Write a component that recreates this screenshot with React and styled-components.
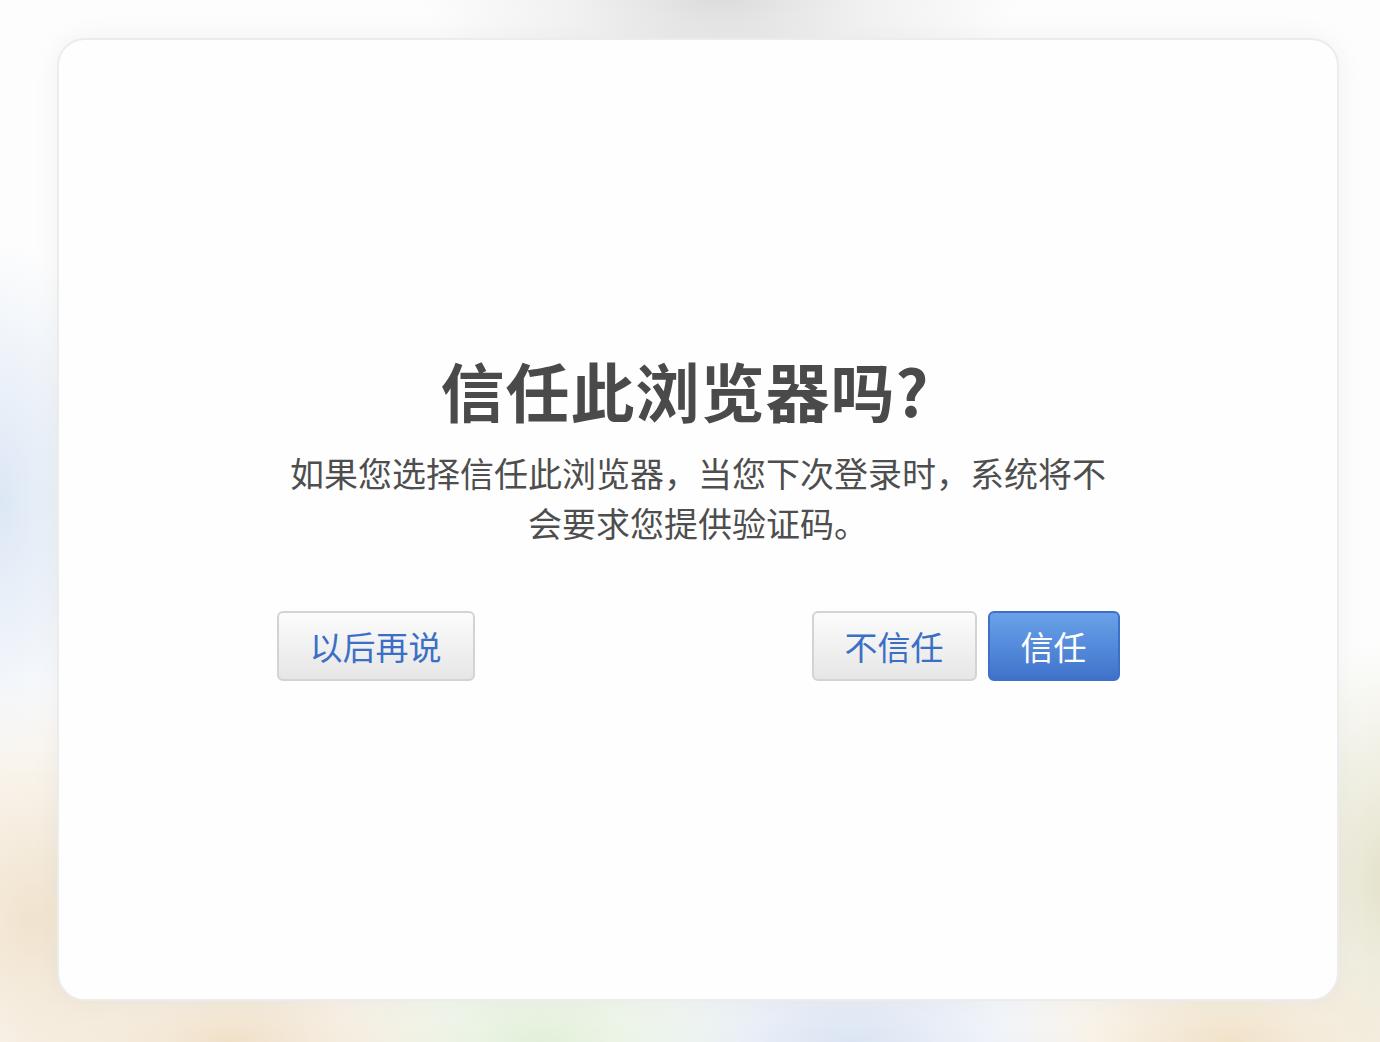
import styled, { createGlobalStyle } from "styled-components";

const GlobalStyle = createGlobalStyle`
  html, body {
    margin: 0;
    padding: 0;
  }
  body {
    font-family: "Noto Sans CJK SC", "Noto Sans", sans-serif;
    background-color: #fdfdfd;
  }
`;

const Page = styled.div`
  box-sizing: border-box;
  height: 1042px;
  padding: 38px 41px 41px 57px;
  display: flex;
  background:
    radial-gradient(ellipse 300px 110px at 720px 0, #dcdcdc 0%, rgba(236, 236, 236, 0.7) 50%, rgba(253, 253, 253, 0) 100%),
    radial-gradient(ellipse 120px 260px at 0 500px, #dce7f5 0%, rgba(223, 233, 246, 0) 100%),
    radial-gradient(ellipse 160px 240px at 30px 920px, #f1e3cd 0%, rgba(242, 229, 209, 0) 100%),
    radial-gradient(ellipse 240px 100px at 230px 1042px, #f0e0c8 0%, rgba(241, 226, 203, 0) 100%),
    radial-gradient(ellipse 220px 100px at 540px 1042px, #e2efd9 0%, rgba(228, 240, 220, 0) 100%),
    radial-gradient(ellipse 240px 100px at 850px 1042px, #dbe4f3 0%, rgba(221, 230, 243, 0) 100%),
    radial-gradient(ellipse 240px 100px at 1230px 1042px, #f1e2c9 0%, rgba(242, 228, 204, 0) 100%),
    radial-gradient(ellipse 100px 240px at 1380px 880px, #e5e3cc 0%, rgba(231, 229, 208, 0) 100%),
    #fdfdfd;
`;

const Card = styled.main`
  flex: 1;
  box-sizing: border-box;
  border: 2px solid #ececec;
  border-radius: 28px;
  background: #fefefe;
  box-shadow: 0 0 28px rgba(0, 0, 0, 0.05);
  display: flex;
  flex-direction: column;
  align-items: center;
  justify-content: center;
`;

const Title = styled.h1`
  margin: 0;
  padding-right: 26px;
  font-size: 64px;
  line-height: 77px;
  font-weight: 700;
  color: #4a4a4a;
  letter-spacing: 1px;
`;

const Message = styled.p`
  margin: 20px 0 0;
  width: 830px;
  font-size: 34px;
  line-height: 50px;
  color: #4e4e4e;
  text-align: center;
`;

const Actions = styled.div`
  margin: 63px 0 8px;
  width: 843px;
  display: flex;
  justify-content: space-between;
  align-items: center;
`;

const Group = styled.div`
  display: flex;
  gap: 11px;
`;

const Button = styled.button`
  box-sizing: border-box;
  height: 70px;
  padding: 0 31px;
  font-family: inherit;
  font-size: 33px;
  border-radius: 6px;
  cursor: pointer;
  border: 2px solid ${({ $primary }) => ($primary ? "#3f70c8" : "#d3d3d3")};
  color: ${({ $primary }) => ($primary ? "#ffffff" : "#3b6fc6")};
  background: ${({ $primary }) =>
    $primary
      ? "linear-gradient(#6aa2e9, #3f73cb)"
      : "linear-gradient(#fcfcfc, #e6e6e6)"};
`;

export default function App() {
  return (
    <>
      <GlobalStyle />
      <Page>
        <Card>
          <Title>信任此浏览器吗?</Title>
          <Message>
            如果您选择信任此浏览器，当您下次登录时，系统将不会要求您提供验证码。
          </Message>
          <Actions>
            <Button>以后再说</Button>
            <Group>
              <Button>不信任</Button>
              <Button $primary>信任</Button>
            </Group>
          </Actions>
        </Card>
      </Page>
    </>
  );
}
